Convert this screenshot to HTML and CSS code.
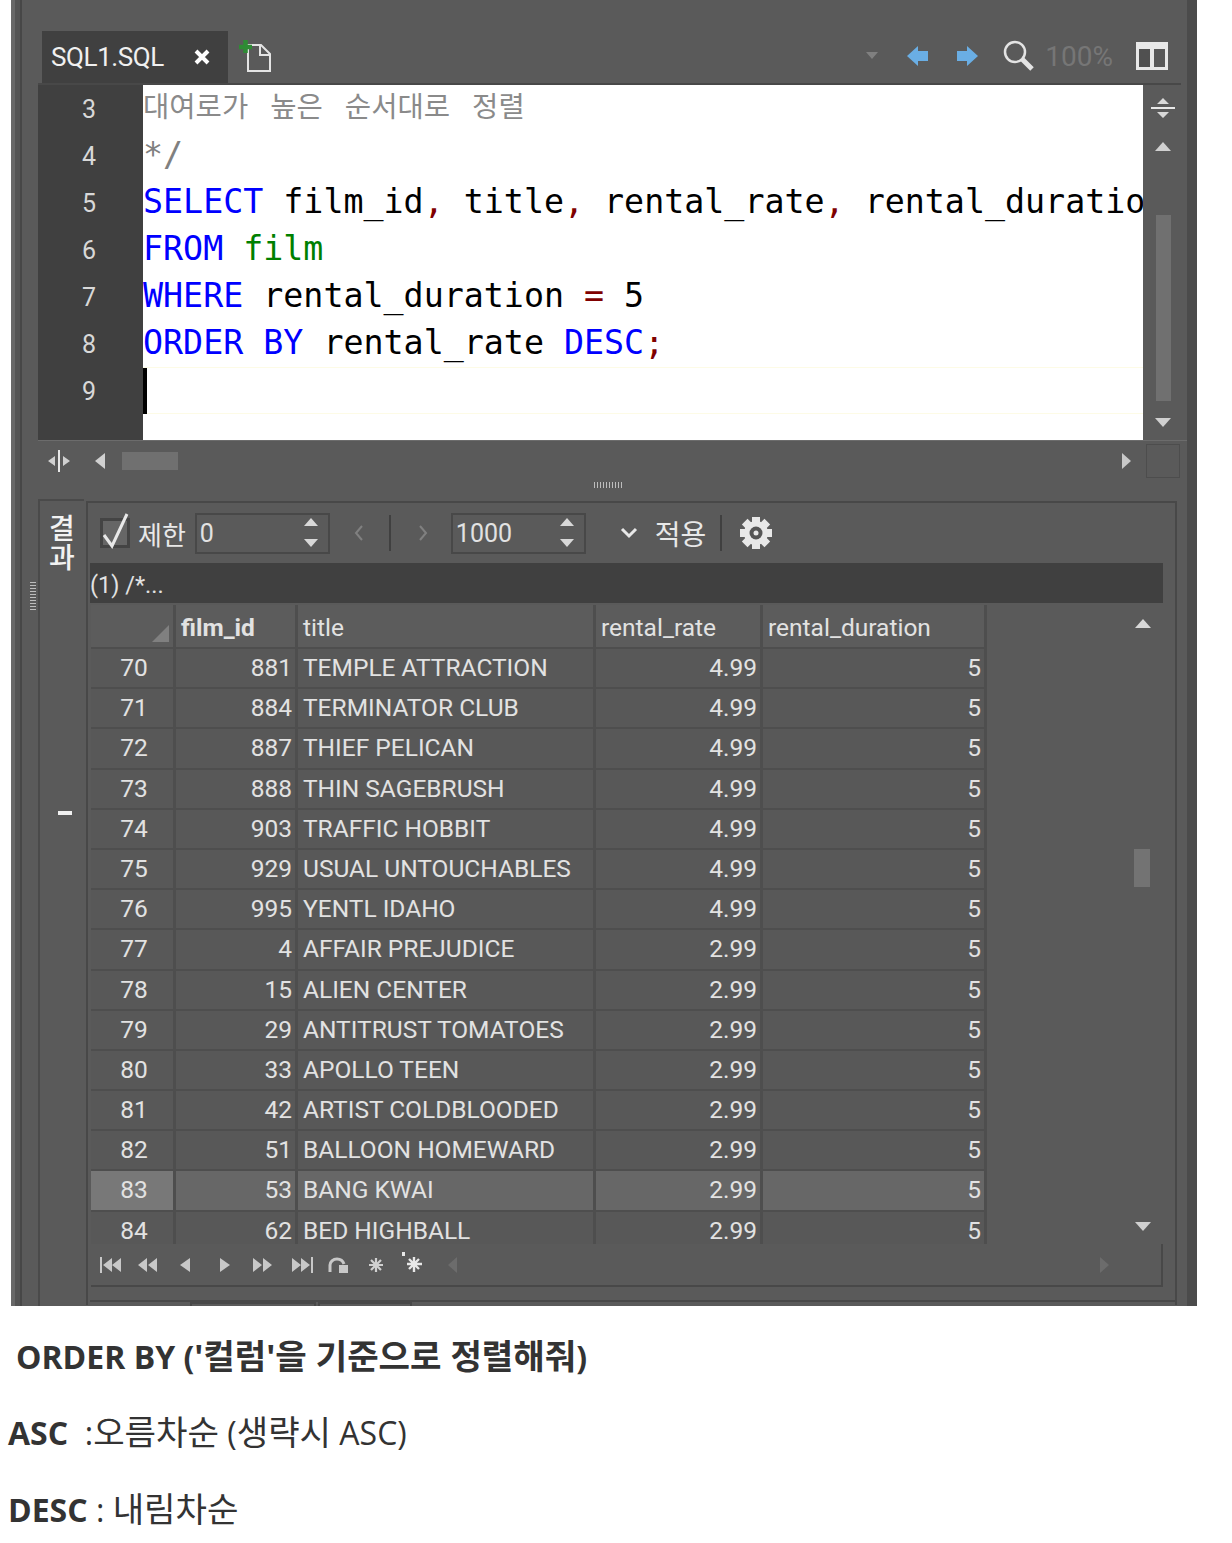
FILE: index.html
```html
<!DOCTYPE html>
<html lang="ko">
<head>
  <meta charset="UTF-8">
  <title>ORDER BY</title>
  <link rel="stylesheet" href="styles.css">
</head>
<body>
  <div class="window">
    <div class="rail"><div class="grip-v"></div></div>
    <div class="main">

      <div class="tabbar">
        <div class="tab">
          <span class="tab-name">SQL1.SQL</span>
          <svg class="tab-close" width="18" height="18" viewBox="0 0 18 18"><path d="M3 3l12 12M15 3L3 15" stroke="#fff" stroke-width="4"/></svg>
        </div>
        <svg class="new-file" width="34" height="34" viewBox="0 0 34 34">
          <path d="M9 6h13l9 9v17H9z" fill="none" stroke="#e4e4e4" stroke-width="2"/>
          <path d="M21 6v10h10" fill="none" stroke="#e4e4e4" stroke-width="2"/>
          <path d="M0 8h13M6.500 1v13" stroke="#2e8b34" stroke-width="4.500"/>
        </svg>
        <div class="tabbar-tools">
          <svg class="tool-drop" width="12" height="8" viewBox="0 0 12 8"><path d="M0 0h12L6 7z" fill="#808080"/></svg>
          <svg class="tool-back" width="22" height="20" viewBox="0 0 22 20"><path d="M0 10L11 0v5h10v10H11v5z" fill="#6aaee4"/></svg>
          <svg class="tool-fwd" width="22" height="20" viewBox="0 0 22 20"><path d="M22 10L11 0v5H1v10h10v5z" fill="#6aaee4"/></svg>
          <svg class="tool-zoom" width="32" height="32" viewBox="0 0 32 32"><circle cx="12" cy="12" r="10" fill="none" stroke="#e4e4e4" stroke-width="2.500"/><path d="M19 19l10 10" stroke="#e4e4e4" stroke-width="5"/></svg>
          <span class="zoom-value">100%</span>
          <svg class="tool-split" width="32" height="28" viewBox="0 0 32 28"><path d="M0 0h32v28H0z" fill="#e8e8e8"/><path d="M3 7h11v18H3z" fill="#505050"/><path d="M18 7h11v18H18z" fill="#585858"/></svg>
        </div>
      </div>

      <div class="editor">
        <div class="gutter">
          <div>3</div><div>4</div><div>5</div><div>6</div><div>7</div><div>8</div><div>9</div>
        </div>
        <div class="code">
          <div class="line comment-ko">대여로가 높은 순서대로 정렬</div>
          <div class="line comment">*/</div>
          <div class="line"><span class="kw">SELECT</span> film_id<span class="pn">,</span> title<span class="pn">,</span> rental_rate<span class="pn">,</span> rental_duration</div>
          <div class="line"><span class="kw">FROM</span> <span class="tb">film</span></div>
          <div class="line"><span class="kw">WHERE</span> rental_duration <span class="pn">=</span> 5</div>
          <div class="line"><span class="kw">ORDER BY</span> rental_rate <span class="kw">DESC</span><span class="pn">;</span></div>
          <div class="line current"><span class="caret"></span></div>
        </div>
        <div class="vscroll">
          <svg class="split-h" width="24" height="22" viewBox="0 0 24 22"><path d="M12 1l6 6H6zM12 21l-6-6h12z" fill="#d8d8d8"/><path d="M0 11h24" stroke="#e8e8e8" stroke-width="2"/></svg>
          <svg class="arrow-up" width="16" height="9" viewBox="0 0 16 9"><path d="M8 0l8 9H0z" fill="#d0d0d0"/></svg>
          <div class="thumb"></div>
          <svg class="arrow-down" width="16" height="9" viewBox="0 0 16 9"><path d="M0 0h16L8 9z" fill="#d0d0d0"/></svg>
        </div>
      </div>

      <div class="hscroll">
        <svg class="split-v" width="22" height="24" viewBox="0 0 22 24"><path d="M0 12l7-5v10zM22 12l-7-5v10z" fill="#d0d0d0"/><path d="M11 1v22" stroke="#e8e8e8" stroke-width="2"/></svg>
        <svg class="arrow-left" width="10" height="16" viewBox="0 0 10 16"><path d="M0 8l10-8v16z" fill="#d0d0d0"/></svg>
        <div class="hthumb"></div>
        <svg class="arrow-right" width="9" height="16" viewBox="0 0 9 16"><path d="M9 8L0 0v16z" fill="#c8c8c8"/></svg>
        <div class="corner"></div>
      </div>

      <div class="splitter"><div class="grip-h"></div></div>

      <div class="results">
        <div class="side-tab">
          <div class="side-label">결<br>과</div>
          <div class="side-dash"></div>
        </div>
        <div class="panel">
          <div class="toolbar">
            <div class="check">
              <svg width="30" height="36" viewBox="0 0 30 36"><path d="M4 22l8 11L27 1" fill="none" stroke="#e8e8e8" stroke-width="3"/></svg>
            </div>
            <span class="limit-label">제한</span>
            <div class="spin">
              <span>0</span>
              <svg width="16" height="32" viewBox="0 0 16 32"><path d="M8 1l7 8H1zM1 22h14l-7 8z" fill="#d8d8d8"/></svg>
            </div>
            <svg class="page-prev" width="10" height="18" viewBox="0 0 10 18"><path d="M8 2L2 9l6 7" fill="none" stroke="#808080" stroke-width="2"/></svg>
            <div class="sep sep-page"></div>
            <svg class="page-next" width="10" height="18" viewBox="0 0 10 18"><path d="M2 2l6 7-6 7" fill="none" stroke="#808080" stroke-width="2"/></svg>
            <div class="spin spin-rows">
              <span>1000</span>
              <svg width="16" height="32" viewBox="0 0 16 32"><path d="M8 1l7 8H1zM1 22h14l-7 8z" fill="#d8d8d8"/></svg>
            </div>
            <svg class="chevron" width="18" height="12" viewBox="0 0 18 12"><path d="M2 2l7 7 7-7" fill="none" stroke="#e8e8e8" stroke-width="3"/></svg>
            <span class="apply">적용</span>
            <div class="sep sep-apply"></div>
            <svg class="gear" width="34" height="34" viewBox="0 0 34 34">
              <g fill="#e8e8e8">
                <circle cx="17" cy="17" r="12"/>
                <rect x="13" y="1" width="8" height="32"/>
                <rect x="1" y="13" width="32" height="8"/>
                <rect x="13" y="1" width="8" height="32" transform="rotate(45 17 17)"/>
                <rect x="13" y="1" width="8" height="32" transform="rotate(-45 17 17)"/>
              </g>
              <circle cx="17" cy="17" r="6.500" fill="#555"/>
              <circle cx="17" cy="17" r="2.500" fill="#e8e8e8"/>
            </svg>
          </div>

          <div class="strip">(1) /*...</div>

          <div class="grid-wrap">
            <div class="grid">
              <div class="row head">
                <div class="cell num"><svg class="sort" width="17" height="17" viewBox="0 0 17 17"><path d="M17 0v17H0z" fill="#808080"/></svg></div>
                <div class="cell"><b>film_id</b></div>
                <div class="cell">title</div>
                <div class="cell">rental_rate</div>
                <div class="cell">rental_duration</div>
              </div>
              <div class="row"><div class="cell num">70</div><div class="cell r">881</div><div class="cell">TEMPLE ATTRACTION</div><div class="cell r">4.99</div><div class="cell r">5</div></div>
              <div class="row"><div class="cell num">71</div><div class="cell r">884</div><div class="cell">TERMINATOR CLUB</div><div class="cell r">4.99</div><div class="cell r">5</div></div>
              <div class="row"><div class="cell num">72</div><div class="cell r">887</div><div class="cell">THIEF PELICAN</div><div class="cell r">4.99</div><div class="cell r">5</div></div>
              <div class="row"><div class="cell num">73</div><div class="cell r">888</div><div class="cell">THIN SAGEBRUSH</div><div class="cell r">4.99</div><div class="cell r">5</div></div>
              <div class="row"><div class="cell num">74</div><div class="cell r">903</div><div class="cell">TRAFFIC HOBBIT</div><div class="cell r">4.99</div><div class="cell r">5</div></div>
              <div class="row"><div class="cell num">75</div><div class="cell r">929</div><div class="cell">USUAL UNTOUCHABLES</div><div class="cell r">4.99</div><div class="cell r">5</div></div>
              <div class="row"><div class="cell num">76</div><div class="cell r">995</div><div class="cell">YENTL IDAHO</div><div class="cell r">4.99</div><div class="cell r">5</div></div>
              <div class="row"><div class="cell num">77</div><div class="cell r">4</div><div class="cell">AFFAIR PREJUDICE</div><div class="cell r">2.99</div><div class="cell r">5</div></div>
              <div class="row"><div class="cell num">78</div><div class="cell r">15</div><div class="cell">ALIEN CENTER</div><div class="cell r">2.99</div><div class="cell r">5</div></div>
              <div class="row"><div class="cell num">79</div><div class="cell r">29</div><div class="cell">ANTITRUST TOMATOES</div><div class="cell r">2.99</div><div class="cell r">5</div></div>
              <div class="row"><div class="cell num">80</div><div class="cell r">33</div><div class="cell">APOLLO TEEN</div><div class="cell r">2.99</div><div class="cell r">5</div></div>
              <div class="row"><div class="cell num">81</div><div class="cell r">42</div><div class="cell">ARTIST COLDBLOODED</div><div class="cell r">2.99</div><div class="cell r">5</div></div>
              <div class="row"><div class="cell num">82</div><div class="cell r">51</div><div class="cell">BALLOON HOMEWARD</div><div class="cell r">2.99</div><div class="cell r">5</div></div>
              <div class="row selected"><div class="cell num">83</div><div class="cell r">53</div><div class="cell">BANG KWAI</div><div class="cell r">2.99</div><div class="cell r">5</div></div>
              <div class="row"><div class="cell num">84</div><div class="cell r">62</div><div class="cell">BED HIGHBALL</div><div class="cell r">2.99</div><div class="cell r">5</div></div>
            </div>
            <div class="grid-scroll">
              <svg class="grid-up" width="16" height="9" viewBox="0 0 16 9"><path d="M8 0l8 9H0z" fill="#d8d8d8"/></svg>
              <div class="grid-thumb"></div>
              <svg class="grid-down" width="16" height="9" viewBox="0 0 16 9"><path d="M0 0h16L8 9z" fill="#d0d0d0"/></svg>
            </div>
          </div>

          <div class="nav">
            <svg width="22" height="16" viewBox="0 0 22 16"><path d="M1 0v16" stroke="#c8c8c8" stroke-width="2"/><path d="M3 8l9-7v14zM12 8l9-7v14z" fill="#c8c8c8"/></svg>
            <svg width="20" height="16" viewBox="0 0 20 16"><path d="M0 8l9-7v14zM10 8l9-7v14z" fill="#c8c8c8"/></svg>
            <svg width="11" height="16" viewBox="0 0 11 16"><path d="M0 8l10-7v14z" fill="#c8c8c8"/></svg>
            <svg width="11" height="16" viewBox="0 0 11 16"><path d="M11 8L1 1v14z" fill="#c8c8c8"/></svg>
            <svg width="20" height="16" viewBox="0 0 20 16"><path d="M20 8l-9-7v14zM10 8L1 1v14z" fill="#c8c8c8"/></svg>
            <svg width="22" height="16" viewBox="0 0 22 16"><path d="M21 0v16" stroke="#c8c8c8" stroke-width="2"/><path d="M19 8l-9-7v14zM10 8L1 1v14z" fill="#c8c8c8"/></svg>
            <svg width="22" height="18" viewBox="0 0 22 18"><path d="M3 16V9c0-3 3-6 7-6s6 2 7 5" fill="none" stroke="#c8c8c8" stroke-width="3"/><path d="M12 9h9v8h-9z" fill="#c8c8c8"/></svg>
            <svg width="16" height="16" viewBox="0 0 16 16"><path d="M8 1v14M1 8h14M3 3l10 10M13 3L3 13" stroke="#d0d0d0" stroke-width="2.200"/></svg>
            <svg class="nav-new" width="22" height="22" viewBox="0 0 22 22"><path d="M13 6v15M6 13h15M8 8l10 10M18 8L8 18" stroke="#e8e8e8" stroke-width="2.400"/><path d="M1 1h3v4H1z" fill="#e8e8e8"/></svg>
            <svg class="nav-off" width="9" height="16" viewBox="0 0 9 16"><path d="M0 8l9-8v16z" fill="#6c6c6c"/></svg>
            <svg class="nav-end" width="9" height="16" viewBox="0 0 9 16"><path d="M9 8L0 0v16z" fill="#6c6c6c"/></svg>
          </div>

          <div class="subtabs"><span class="subtab-a"></span><span class="subtab-b"></span></div>
        </div>
      </div>
    </div>
  </div>

  <div class="notes">
    <p class="note-title"><strong>ORDER BY (<span class="ko">'컬럼'을 기준으로 정렬해줘</span>)</strong></p>
    <p><strong>ASC</strong>&nbsp; :<span class="ko">오름차순</span> (<span class="ko">생략시</span> ASC)</p>
    <p class="note-last"><strong>DESC</strong> : <span class="ko">내림차순</span></p>
  </div>
</body>
</html>
```

FILE: styles.css
```css
body {
  margin: 0;
  background-color: #fff;
  font-family: "Open Sans", "Noto Sans CJK KR", sans-serif;
}

svg {
  display: block;
  flex: none;
}

/* screenshot window */
.window {
  display: flex;
  width: 1172px;
  height: 1306px;
  margin-left: 11px;
  overflow: hidden;
  border-left: 4px solid #686868;
  border-right: 10px solid #4b4b4b;
  background-color: #5a5a5a;
  color: #e2e2e2;
  font-family: Roboto, "Noto Sans CJK KR", sans-serif;
}

.rail {
  width: 23px;
  flex: none;
  box-sizing: border-box;
  padding: 580px 0 0 15px;
  background: linear-gradient(90deg, #545454 0 5px, #474747 5px 7px, transparent 7px);
}

.grip-v {
  width: 6px;
  height: 30px;
  background: repeating-linear-gradient(0deg, #bdbdbd 0 1px, transparent 1px 3px);
}

.main {
  flex: 1;
  min-width: 0;
}

/* tabs */
.tabbar {
  display: flex;
  align-items: flex-start;
  width: 1143px;
  height: 85px;
  box-sizing: border-box;
  padding: 31px 0 0 4px;
  border-bottom: 2px solid #484848;
}

.tab {
  display: flex;
  align-items: center;
  width: 186px;
  height: 52px;
  box-sizing: border-box;
  padding-left: 9px;
  background-color: #404040;
}

.tab-name {
  width: 142px;
  font-size: 26px;
  letter-spacing: -0.4px;
  color: #f0f0f0;
}

.new-file {
  margin: 8px 0 0 11px;
}

.tabbar-tools {
  display: flex;
  align-items: center;
  height: 50px;
  margin-left: auto;
  padding-right: 13px;
}

.tool-back { margin-left: 29px; }
.tool-fwd { margin-left: 27px; }
.tool-zoom { margin-left: 25px; }
.tool-split { margin-left: 23px; }

.zoom-value {
  margin-left: 10px;
  font-size: 28px;
  color: #767676;
}

/* sql editor */
.editor {
  display: flex;
  height: 355px;
}

.gutter {
  width: 105px;
  flex: none;
  box-sizing: border-box;
  padding: 0 0 0 18px;
  background-color: #404040;
  font-size: 25px;
  text-align: center;
  color: #d8d8d8;
}

.gutter div {
  height: 47px;
  line-height: 49px;
  padding-right: 21px;
}

.code {
  width: 1000px;
  overflow: hidden;
  background-color: #fff;
  font-family: "DejaVu Sans Mono", monospace;
  font-size: 33.3px;
  color: #000;
}

.line {
  height: 47px;
  line-height: 45px;
  white-space: pre;
}

.comment { color: #808080; }

.comment-ko {
  font-family: "Noto Sans CJK KR", sans-serif;
  font-size: 28.6px;
  line-height: 40px;
  word-spacing: 14px;
  color: #8a8a8a;
}

.kw { color: #0000ff; }
.tb { color: #008000; }
.pn { color: #800000; }

.current {
  box-sizing: border-box;
  border-top: 1px solid #fdfbe6;
  border-bottom: 1px solid #fdfbe6;
}

.caret {
  display: block;
  width: 4px;
  height: 46px;
  background-color: #000;
}

.vscroll {
  display: flex;
  flex-direction: column;
  align-items: center;
  width: 40px;
}

.split-h { margin-top: 12px; }
.arrow-up { margin-top: 23px; }

.thumb {
  width: 15px;
  height: 186px;
  margin-top: 64px;
  background-color: #707070;
}

.arrow-down { margin-top: 17px; }

.hscroll {
  display: flex;
  align-items: center;
  height: 40px;
  padding-left: 10px;
  box-sizing: border-box;
  border-top: 1px solid #6c6c6c;
}

.arrow-left { margin-left: 25px; }

.hthumb {
  width: 56px;
  height: 18px;
  margin-left: 17px;
  background-color: #707070;
}

.arrow-right { margin-left: 944px; }

.corner {
  width: 34px;
  height: 34px;
  margin-left: 15px;
  box-sizing: border-box;
  border: 1px solid #4d4d4d;
}

.splitter {
  height: 19px;
  margin-bottom: -2px;
}

.grip-h {
  width: 30px;
  height: 6px;
  margin: 2px 0 0 556px;
  background: repeating-linear-gradient(90deg, #bdbdbd 0 1px, transparent 1px 3px);
}

/* result panel */
.results {
  display: flex;
  height: 809px;
}

.side-tab {
  width: 46px;
  height: 100%;
  box-sizing: border-box;
  padding-top: 14px;
  border-left: 2px solid #4a4a4a;
  border-top: 2px solid #4a4a4a;
}

.side-label {
  font-size: 28px;
  font-weight: 500;
  line-height: 29px;
  text-align: center;
  color: #f2f2f2;
}

.side-dash {
  width: 14px;
  height: 4px;
  margin: 238px 0 0 18px;
  background-color: #f0f0f0;
}

.panel {
  width: 1091px;
  height: 804px;
  margin: 2px 0 0 2px;
  box-sizing: border-box;
  padding-left: 2px;
  border: 2px solid #484848;
  border-bottom: none;
}

.toolbar {
  display: flex;
  align-items: center;
  height: 60px;
  padding-left: 10px;
}

.check {
  display: flex;
  flex: none;
  align-items: flex-end;
  justify-content: center;
  width: 30px;
  height: 30px;
  box-sizing: border-box;
  border: 3px solid #444;
  background-color: #666;
}

.check svg { margin-bottom: -4px; }

.limit-label {
  margin-left: 8px;
  font-size: 26px;
  color: #e8e8e8;
}

.spin {
  display: flex;
  align-items: center;
  justify-content: space-between;
  width: 135px;
  height: 41px;
  margin-left: 9px;
  box-sizing: border-box;
  padding: 0 9px 0 3px;
  border: 2px solid #484848;
  font-size: 25px;
}

.page-prev { margin-left: 24px; }
.sep { width: 2px; height: 36px; background-color: #404040; }
.sep-page { margin-left: 25px; }
.page-next { margin-left: 27px; }
.spin-rows { margin-left: 23px; }
.chevron { margin-left: 34px; }

.apply {
  margin-left: 17px;
  font-size: 28px;
  color: #e8e8e8;
}

.sep-apply { margin-left: 14px; }
.gear { margin-left: 17px; }

.strip {
  width: 1073px;
  height: 40px;
  line-height: 44px;
  background-color: #404040;
  font-size: 23.5px;
}

.grid-wrap {
  display: flex;
  width: 1072px;
  height: 639px;
  margin: 2px 0 0 1px;
  overflow: hidden;
}

.grid {
  width: 896px;
  flex: none;
}

.row {
  display: grid;
  grid-template-columns: 85px 122px 298px 167px 224px;
  height: 40.2px;
  background-color: #585858;
  font-size: 24.5px;
  line-height: 38px;
}

.head {
  height: 44px;
  background-color: #5c5c5c;
  line-height: 46px;
}

.cell {
  box-sizing: border-box;
  padding: 0 3px 0 5px;
  border-right: 3px solid #4e4e4e;
  border-bottom: 2px solid #4e4e4e;
  white-space: nowrap;
  overflow: hidden;
}

.num {
  position: relative;
  padding-left: 7px;
  text-align: center;
}

.sort {
  position: absolute;
  right: 4px;
  bottom: 5px;
}

.r { text-align: right; }

.selected { background-color: #676767; }
.selected .num { background-color: #787878; }

.grid-scroll {
  display: flex;
  flex-direction: column;
  align-items: flex-start;
  width: 176px;
}

.grid-up { margin: 14px 0 0 148px; }

.grid-thumb {
  width: 16px;
  height: 38px;
  margin: 221px 0 0 147px;
  background-color: #737373;
}

.grid-down { margin: 335px 0 0 148px; }

.nav {
  display: flex;
  align-items: center;
  width: 1072px;
  height: 43px;
  margin-left: 1px;
  box-sizing: border-box;
  padding-left: 9px;
  gap: 18px;
  border-bottom: 2px solid #484848;
  border-right: 2px solid #484848;
}

.nav svg:nth-child(2) { margin-left: -2px; }
.nav svg:nth-child(3) { margin-left: 4px; }
.nav svg:nth-child(4) { margin-left: 9.5px; }
.nav svg:nth-child(5) { margin-left: 4.5px; }
.nav svg:nth-child(6) { margin-left: 1px; }
.nav svg:nth-child(7) { margin-left: -4px; }
.nav svg:nth-child(8) { margin-left: 1px; }
.nav .nav-new { margin: -6px 0 0 -1px; }
.nav-off { margin-left: 6.5px; }
.nav-end { margin-left: 625.5px; }

/* bottom of the panel */
.subtabs {
  display: flex;
  height: 3px;
  margin-top: 13px;
  padding-left: 100px;
  gap: 2px;
  border-top: 2px solid #484848;
}

.subtab-a, .subtab-b {
  height: 3px;
  border: 2px solid #484848;
  border-bottom: none;
}

.subtab-a { width: 122px; }
.subtab-b { width: 90px; }

/* text below the picture */
.notes {
  padding-left: 8px;
  color: #333;
  font-size: 32px;
}

.notes p {
  height: 76px;
  margin: 0;
  line-height: 76px;
  white-space: nowrap;
}

.notes .note-title {
  margin-top: 12px;
  padding-left: 8px;
}

.notes .note-last {
  margin-top: 1px;
}

.ko {
  font-size: 34.2px;
}
```
